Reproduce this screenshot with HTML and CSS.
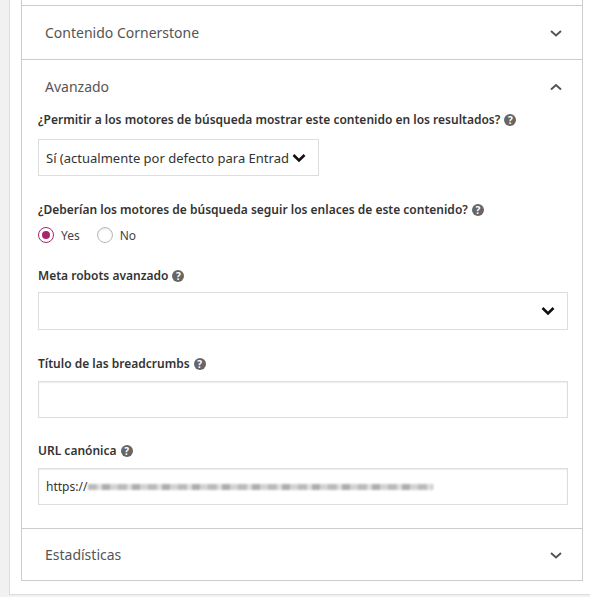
FILE: index.html
```html
<!DOCTYPE html>
<html lang="es">
<head>
<meta charset="utf-8">
<title>Yoast</title>
<link rel="stylesheet" href="styles.css">
</head>
<body>
<div class="outer">
  <div class="panel">
    <div class="spacer"></div>
    <section class="sec">
      <div class="head">
        <span class="head-title">Contenido Cornerstone</span>
        <svg class="chev" width="14" height="10" viewBox="0 0 14 10"><path d="M2 3 L7 7.5 L12 3" fill="none" stroke="#555" stroke-width="2"/></svg>
      </div>
    </section>
    <section class="sec">
      <div class="head">
        <span class="head-title">Avanzado</span>
        <svg class="chev" width="14" height="10" viewBox="0 0 14 10"><path d="M2 7.5 L7 3 L12 7.5" fill="none" stroke="#555" stroke-width="2"/></svg>
      </div>
      <div class="body">
        <div class="label l1">¿Permitir a los motores de búsqueda mostrar este contenido en los resultados? <span class="help">?</span></div>
        <div class="select short">
          <span class="sel-text">Sí (actualmente por defecto para Entradas)</span>
          <svg class="sel-chev" width="14" height="10" viewBox="0 0 14 10"><path d="M1.5 2 L7 7.5 L12.5 2" fill="none" stroke="#111" stroke-width="2.6"/></svg>
        </div>
        <div class="label l2">¿Deberían los motores de búsqueda seguir los enlaces de este contenido? <span class="help">?</span></div>
        <div class="radios">
          <span class="radio checked"></span><span class="rlabel">Yes</span>
          <span class="radio"></span><span class="rlabel">No</span>
        </div>
        <div class="label l3">Meta robots avanzado <span class="help">?</span></div>
        <div class="select wide">
          <span class="sel-text"></span>
          <svg class="sel-chev" width="14" height="10" viewBox="0 0 14 10"><path d="M1.5 2 L7 7.5 L12.5 2" fill="none" stroke="#111" stroke-width="2.6"/></svg>
        </div>
        <div class="label l4">Título de las breadcrumbs <span class="help">?</span></div>
        <div class="input"></div>
        <div class="label l5">URL canónica <span class="help">?</span></div>
        <div class="input url"><span class="url-text">https://</span><span class="blur"></span></div>
      </div>
    </section>
    <section class="sec">
      <div class="head last">
        <span class="head-title">Estadísticas</span>
        <svg class="chev" width="14" height="10" viewBox="0 0 14 10"><path d="M2 3 L7 7.5 L12 3" fill="none" stroke="#555" stroke-width="2"/></svg>
      </div>
    </section>
  </div>
</div>
</body>
</html>
```
FILE: styles.css
```css
html, body { margin: 0; padding: 0; }
body {
  background: #f1f1f1;
  width: 590px;
  height: 597px;
  overflow: hidden;
  font-family: "Noto Sans", "Open Sans", sans-serif;
  color: #333;
}
.outer {
  margin-left: 9px;
  width: 620px;
  background: #fff;
  border: 1px solid #dcdcdc;
  border-top: none;
  padding: 0 0 13px 11px;
  box-sizing: border-box;
}
.panel {
  width: 562px;
  border: 1px solid #ccc;
  border-top: none;
  box-sizing: border-box;
}
.spacer { height: 5px; }
.sec { border-top: 1px solid #ccc; }
.head {
  height: 53px;
  display: flex;
  align-items: center;
  justify-content: space-between;
  padding: 0 19px 0 23px;
}
.head.last { height: 51px; }
.head-title {
  font-size: 14px;
  color: #555;
  margin-top: -1px;
}
.chev { display: block; }
.body {
  padding: 0 15px 23px 16px;
  display: flex;
  flex-direction: column;
  align-items: flex-start;
}
.label {
  font-size: 12px;
  font-weight: 600;
  line-height: 18px;
  color: #333;
  white-space: nowrap;
  display: flex;
  align-items: center;
  gap: 4px;
}
.help {
  width: 12px;
  height: 12px;
  border-radius: 50%;
  background: #666;
  color: #fff;
  font-size: 10px;
  font-weight: 700;
  line-height: 12px;
  text-align: center;
  display: inline-block;
}
.l1 { margin-top: -2px; margin-bottom: 10px; }
.l2 { margin-top: 25px; margin-bottom: 8px; }
.l3 { margin-top: 24px; margin-bottom: 7px; }
.l4 { margin-top: 25px; margin-bottom: 8px; }
.l5 { margin-top: 24px; margin-bottom: 8px; }
.select {
  height: 37px;
  border: 1px solid #ddd;
  box-sizing: border-box;
  display: flex;
  align-items: center;
  justify-content: space-between;
  padding: 0 12px 0 7px;
  background: #fff;
}
.select.short { width: 281px; }
.select.wide { width: 530px; height: 38px; }
.sel-text {
  font-size: 13px;
  color: #333;
  white-space: nowrap;
  overflow: hidden;
  width: 243px;
}
.sel-chev { display: block; flex: none; }
.radios {
  display: flex;
  align-items: center;
  height: 16px;
}
.radio {
  width: 16px;
  height: 16px;
  border-radius: 50%;
  border: 1px solid #b4b9be;
  box-sizing: border-box;
  box-shadow: inset 0 1px 2px rgba(0,0,0,.1);
  background: #fff;
  position: relative;
}
.radio.checked {
  border: 1.5px solid #a4286a;
  box-shadow: none;
}
.radio.checked::after {
  content: "";
  position: absolute;
  left: 2.5px;
  top: 2.5px;
  width: 8px;
  height: 8px;
  border-radius: 50%;
  background: #a4286a;
}
.rlabel {
  font-size: 12px;
  color: #444;
  margin-left: 7px;
  margin-right: 17px;
}
.input {
  width: 530px;
  height: 37px;
  border: 1px solid #ddd;
  box-sizing: border-box;
  box-shadow: inset 0 1px 2px rgba(0,0,0,.07);
  background: #fff;
}
.url {
  display: flex;
  align-items: center;
  padding-left: 7px;
}
.url-text { font-size: 12px; color: #333; }
.blur {
  width: 345px;
  height: 6px;
  margin-left: 1px;
  background: repeating-linear-gradient(90deg, #aaa 0 9px, #d5d5d5 9px 14px, #999 14px 22px, #c8c8c8 22px 30px);
  filter: blur(1.2px);
  opacity: .8;
}
```
